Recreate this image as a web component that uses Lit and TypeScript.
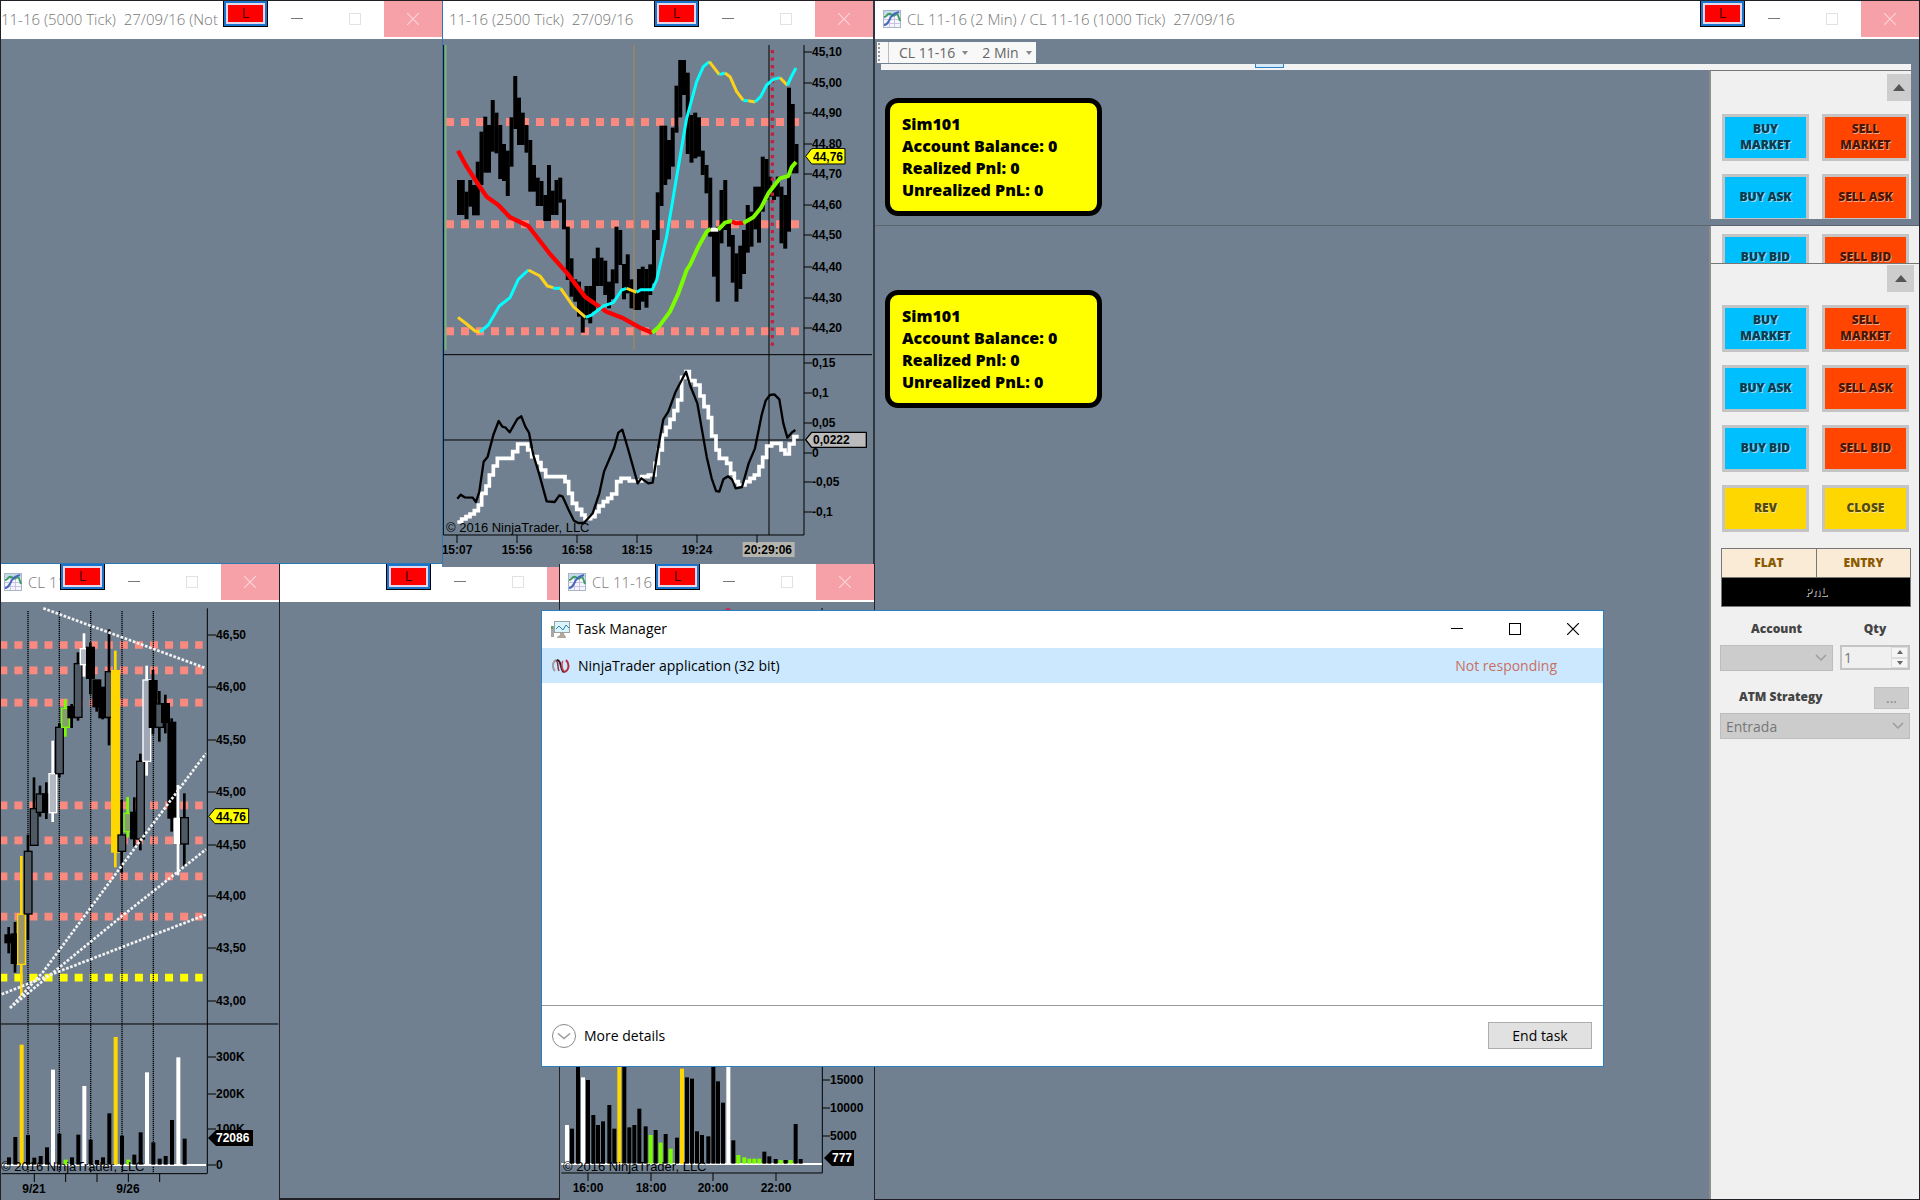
import { LitElement, html, svg, css, nothing } from "lit";
import { customElement } from "lit/decorators.js";

type Pair = [number, number];
/** x, wick top, wick bottom, body top, body bottom, colour, body fill */
type Candle = [number, number, number, number, number, string, string];
type Volume = [number, number, string];

const K = "#000";
const W = "#fff";
const Y = "#ffd700";
const G = "#7cfc00";

/* Chart geometry is kept in thirds of a pixel. */
const PRICE_BARS: Pair[] = [
  [450, 555], [450, 555], [485, 567], [450, 530], [465, 556], [395, 556], [305, 465], [260, 428], [285, 428], [210, 365],
  [248, 370], [285, 447], [342, 453], [362, 498], [262, 410], [138, 297], [203, 345], [248, 345], [285, 368], [330, 485],
  [405, 485], [443, 528], [453, 528], [495, 573], [405, 573], [482, 555], [450, 555], [443, 518], [508, 598], [590, 750],
  [685, 800], [748, 815], [755, 860], [785, 908], [768, 868], [768, 880], [685, 845], [653, 768], [683, 768], [692, 795],
  [755, 835], [718, 808], [590, 760], [600, 705], [702, 808], [673, 790], [748, 835], [785, 840], [717, 840], [710, 815],
  [717, 833], [703, 795], [600, 760], [487, 630], [287, 528], [287, 465], [330, 448], [293, 410], [167, 308], [90, 262],
  [90, 195], [128, 372], [255, 398], [248, 385], [262, 380], [362, 435], [405, 490], [443, 620], [600, 740], [590, 815],
  [480, 640], [450, 600], [570, 650], [615, 758], [670, 815], [647, 777], [600, 732], [525, 668], [545, 650], [470, 598],
  [470, 638], [380, 545], [387, 510], [440, 500], [470, 510], [440, 500], [470, 640], [495, 656], [173, 605], [222, 430],
  [342, 430],
];

const CANDLES: Candle[] = [
  [26, 1101, 1180, 1125, 1148, K, K],
  [45, 1086, 1238, 1122, 1210, K, K],
  [64, 888, 1308, 1063, 1213, Y, "#9a9468"],
  [84, 824, 1140, 874, 1062, K, "#4f5963"],
  [102, 652, 856, 746, 856, K, "#4f5963"],
  [120, 677, 770, 702, 757, K, "#4f5963"],
  [139, 667, 777, 702, 757, K, K],
  [158, 542, 786, 641, 758, W, "#b3b9c2"],
  [178, 490, 652, 502, 641, K, "#4f5963"],
  [196, 418, 530, 445, 502, G, "#83a06d"],
  [215, 432, 504, 440, 473, K, K],
  [234, 277, 482, 311, 472, K, "#4f5963"],
  [252, 220, 350, 266, 314, W, "#b3b9c2"],
  [271, 247, 403, 262, 355, K, K],
  [290, 360, 455, 360, 440, K, K],
  [308, 382, 478, 382, 473, K, K],
  [327, 208, 556, 335, 472, K, "#4f5963"],
  [346, 272, 922, 332, 876, Y, Y],
  [365, 720, 938, 825, 874, K, "#4f5963"],
  [383, 711, 832, 760, 815, G, "#83a06d"],
  [403, 712, 860, 757, 836, K, K],
  [421, 581, 871, 604, 837, K, "#4f5963"],
  [440, 317, 647, 360, 604, W, "#9fa8b4"],
  [459, 330, 523, 362, 502, K, K],
  [478, 393, 545, 432, 502, K, "#4f5963"],
  [496, 404, 520, 431, 487, K, K],
  [515, 475, 815, 487, 774, K, K],
  [534, 675, 946, 775, 850, W, W],
  [553, 700, 917, 773, 852, K, "#4f5963"],
];

const VOLUME_A: Volume[] = [
  [27, 472, K], [46, 411, K], [65, 134, Y], [84, 405, K], [103, 473, K], [122, 468, K], [141, 442, K], [159, 209, W],
  [178, 401, K], [197, 479, G], [216, 472, K], [235, 404, K], [253, 258, W], [272, 419, K], [291, 480, K], [309, 472, K],
  [328, 340, K], [347, 111, Y], [366, 407, K], [385, 479, G], [403, 464, K], [422, 397, K], [441, 217, W], [460, 427, K],
  [479, 476, K], [497, 468, K], [516, 360, K], [535, 172, W], [554, 416, K],
];

const VOLUME_B: Volume[] = [
  [81, 405, W], [96, 416, K], [114, 200, K], [129, 262, W], [144, 270, K], [160, 375, K], [174, 405, K], [189, 394, K],
  [208, 345, K], [223, 416, K], [238, 200, Y], [253, 200, K], [268, 412, K], [283, 405, K], [298, 356, K], [317, 409, K],
  [332, 435, G], [347, 420, K], [362, 458, G], [377, 432, K], [392, 476, G], [411, 443, K], [426, 236, Y], [441, 262, K],
  [456, 266, K], [471, 424, K], [486, 435, K], [505, 439, K], [520, 200, K], [534, 274, K], [549, 338, K], [565, 200, W],
  [580, 451, K], [595, 495, G], [613, 502, G], [628, 506, G], [643, 506, G], [658, 506, G], [673, 485, K], [688, 499, K],
  [707, 507, K], [722, 510, G], [737, 510, K], [752, 510, G], [767, 402, K], [782, 507, K],
];

const line = (points: string, colour: string, width: number) =>
  svg`<polyline points=${points} fill="none" stroke=${colour} stroke-width=${width} stroke-linejoin="round"></polyline>`;

/* Axis scale: a tick at the plot edge followed by its value. */
const scale = (x: number, values: [number, string][]) =>
  values.map(
    ([y, label]) => svg`
      <path d=${`M${x} ${y}h8`} stroke="#000"></path>
      <text class="axis" x=${x + 8} y=${y + 4}>${label}</text>`
  );

const times = (y: number, values: [number, string][]) =>
  values.map(
    ([x, label]) => svg`
      <path d=${`M${x} ${y}v8`} stroke="#000"></path>
      <text class="axis mid" x=${x} y=${y + 19}>${label}</text>`
  );

const chartIcon = html`<svg class="icon" viewBox="0 0 18 18" width="18" height="18" aria-hidden="true">
  <rect x="0" y="0" width="18" height="18" fill="#a9b4c8"></rect>
  <rect x="1" y="1" width="16" height="16" fill="#f4f6fb"></rect>
  <rect x="1" y="1" width="16" height="4" fill="#c3dbe6"></rect>
  <path d="M6.500 5v12M11.500 5v12M1 9.500h16M1 13.500h16" stroke="#c9c3e6"></path>
  <path d="M1 7C4 7 4 3 7 4S9 7 12 5S15 5 17 11" fill="none" stroke="#3f9c62" stroke-width="2"></path>
  <path d="M1 15C5 15 6 10 8 7S12 3 16 2" fill="none" stroke="#4667bd" stroke-width="2"></path>
</svg>`;

const taskIcon = html`<svg class="icon" viewBox="0 0 20 18" width="20" height="18" aria-hidden="true">
  <path d="M1 6h3v11h-3z" fill="#a5a9a6"></path>
  <path d="M1 6h2v3h-2z" fill="#58a55b"></path>
  <rect x="4.500" y="1.500" width="15" height="11" fill="#d9f4fd" stroke="#9a9f9f"></rect>
  <path d="M6 9l3-3 4 4 3-5 3 3" fill="none" stroke="#2f7fb0"></path>
  <path d="M10 13h4v1l2 3v1h-9v-1l3-2z" fill="#b3a999"></path>
</svg>`;

const ninjaIcon = html`<svg class="icon" viewBox="0 0 18 14" width="18" height="14" aria-hidden="true">
  <path d="M3 12C0 9 0 3 4 1" fill="none" stroke="#a39c9f" stroke-width="2"></path>
  <path d="M4 1C7 3 5 8 7 12" fill="none" stroke="#8f2f3b" stroke-width="1.500"></path>
  <path d="M5 1C10 1 8 12 12 13" fill="none" stroke="#33222a" stroke-width="2"></path>
  <path d="M11 2C9 4 10 11 12 12" fill="none" stroke="#d5404c" stroke-width="1.500"></path>
  <path d="M12 13C17 12 18 5 14 1" fill="none" stroke="#b92d3a" stroke-width="2"></path>
</svg>`;

const controls = html`<div class="controls">
  <button aria-label="Minimize">
    <svg viewBox="0 0 12 12" width="12" height="12"><path d="M0 5.5h12" stroke="currentColor"></path></svg>
  </button>
  <button class="max" aria-label="Maximize">
    <svg viewBox="0 0 12 12" width="12" height="12">
      <rect x=".5" y=".5" width="11" height="11" fill="none" stroke="currentColor"></rect>
    </svg>
  </button>
  <button class="close" aria-label="Close">
    <svg viewBox="0 0 12 12" width="12" height="12">
      <path d="M0 0L12 12M12 0L0 12" stroke="currentColor" stroke-width="1.2"></path>
    </svg>
  </button>
</div>`;

const titleBar = (title: string, icon: boolean) => html`<header class="bar">
  ${icon ? chartIcon : nothing}
  <span class="title">${title}</span>
  <span class="badge">L</span>
  ${controls}
</header>`;

const chevron = html`<svg class="chev" viewBox="0 0 12 8" width="12" height="8" aria-hidden="true">
  <path d="M1 1l5 5 5-5" fill="none" stroke="#9c9c9c" stroke-width="1.5"></path>
</svg>`;

@customElement("app-root")
export class AppRoot extends LitElement {
  static styles = css`
    :host {
      display: block;
      font-family: "Open Sans", "Noto Sans", sans-serif;
      font-size: 14px;
      color: #000;
    }
    * { box-sizing: border-box; }
    button, input, select { font: inherit; margin: 0; padding: 0; border: 0; border-radius: 0; }
    svg { display: block; }
    .desktop {
      position: relative;
      height: 100vh;
      min-height: 1200px;
      overflow: hidden;
      background: #202026;
    }
    .win {
      position: absolute;
      display: flex;
      flex-direction: column;
      background: #708090;
      overflow: hidden;
    }
    .w1 { left: 1px; top: 1px; width: 442px; height: 563px; z-index: 3; border: solid #2a79b5; border-width: 0 1px 1px 0; }
    .w2 { left: 442px; top: 1px; width: 431px; height: 566px; z-index: 2; }
    .w3 { left: 873px; top: 1px; right: 1px; bottom: 1px; z-index: 1; border-left: 2px solid #30363e; }
    .w4 { left: 1px; top: 564px; width: 279px; bottom: 0; z-index: 2; border-right: 1px solid #222; }
    .w5 { left: 279px; top: 564px; width: 326px; bottom: 2px; z-index: 1; }
    .w6 { left: 559px; top: 564px; width: 316px; bottom: 0; z-index: 4; border: solid #222; border-width: 0 1px; }
    .bar {
      flex: none;
      display: flex;
      align-items: center;
      height: 38px;
      background: #fff;
      color: #777;
    }
    .bar .icon { flex: none; margin: 0 6px 2px 8px; }
    .w4 .bar .icon { margin-left: 3px; }
    .title { flex: 1; min-width: 0; white-space: pre; font-size: 15px; font-weight: 300; line-height: 36px; align-self: flex-start; }
    .w2 .title { padding-left: 7px; }
    .badge {
      flex: none;
      align-self: flex-start;
      position: relative;
      width: 45px;
      height: 26px;
      border: 1px solid #000;
      border-top: 0;
      background: #f00;
      box-shadow: inset 0 0 0 2px #1874cd, inset 0 0 0 4px #e6d8e8;
      color: #400;
      text-align: center;
      line-height: 24px;
    }
    .controls { flex: none; align-self: flex-start; display: flex; height: 36px; }
    .controls button { width: 58px; display: grid; place-items: center; background: transparent; color: #777; }
    .controls .max { color: #e2e2e2; }
    .controls .close { background: #f6a0a8; color: #fbd5d8; }
    .axis { font: bold 12px "Liberation Sans", sans-serif; }
    .mid { text-anchor: middle; }
    .copy { font: 13px "Liberation Sans", sans-serif; }
    .chart { width: 100%; height: auto; flex: none; }

    .tools { display: flex; padding: 3px 3px 1px 2px; }
    .toolbar { display: flex; align-items: center; height: 21px; background: #f8f8f8; color: #666; }
    .grip { width: 12px; height: 21px; border-right: 1px solid #bbb; background: radial-gradient(#999 1px, transparent 1px) 0 0 / 4px 4px repeat-y; }
    .toolbar button { display: flex; align-items: center; gap: 7px; background: transparent; color: inherit; padding: 0 4px 0 10px; line-height: 21px; }
    .strip { height: 6px; margin: 0 8px 0 6px; background: #f3f3f3; display: flex; }
    .tab { width: 29px; height: 4px; margin-left: 374px; border: 1px solid #2a82c9; border-top: 0; background: #d4e8f6; }
    .row { display: flex; }
    .upper { height: 156px; border-bottom: 1px solid #5b6570; }
    .lower { flex: 1; }
    .pane { flex: 1; padding: 28px 0 0 10px; }
    .lower .pane { padding-top: 64px; }
    .account {
      width: 217px;
      height: 118px;
      padding: 10px 12px;
      border: 5px solid #000;
      border-radius: 13px;
      background: #ff0;
      font: 800 16px/22px "Open Sans", sans-serif;
    }
    .account p { margin: 0; }
    .panel { width: 210px; border-left: 2px solid #8d8d8d; background: #f0f0f0; overflow: hidden; }
    .upper .panel { width: 202px; margin: 0 8px 6px 0; border-top: 1px solid #777; }
    .cut { height: 37px; padding-top: 8px; overflow: hidden; }
    .full { border-top: 1px solid #777; }
    .scroll { display: flex; justify-content: flex-end; padding: 3px 0 13px; }
    .full .scroll { padding: 1px 5px 13px; }
    .scroll button { width: 24px; height: 27px; background: #cdcdcd; display: grid; place-items: center; }
    .full .scroll button { width: 27px; }
    .orders { display: grid; grid-template-columns: 87px 87px; grid-auto-rows: 47px; gap: 13px; padding-left: 11px; }
    .orders button {
      border: 3px solid #c4c4c4;
      font: 800 12px/16px "Open Sans", sans-serif;
      text-align: center;
      padding: 0 8px 1px;
    }
    .buy { background: #00bfff; color: #073d52; text-shadow: 1px 1px #a5d8ea; }
    .sell { background: #ff4500; color: #4d1500; text-shadow: 1px 1px #f0a58c; }
    .flat { background: #ffd700; color: #574a00; text-shadow: 1px 1px #f3e69a; }
    .pos { display: grid; grid-template-columns: 1fr 1fr; width: 190px; margin: 16px 0 0 10px; border: 1px solid #777; font: 800 12px/28px "Open Sans", sans-serif; color: #8b5a00; text-align: center; background: #faebd7; }
    .pos span + span { border-left: 1px solid #777; }
    .pos .pnl { grid-column: 1 / -1; border: 0; border-top: 1px solid #777; background: #000; color: #000; text-shadow: 1px 1px #aaa; }
    .form { display: grid; grid-template-columns: 113px 70px; column-gap: 7px; padding: 12px 0 0 9px; color: #444; }
    .form label { font: 800 12px/20px "Open Sans", sans-serif; text-align: center; margin-bottom: 6px; }
    .pick { display: grid; align-items: center; height: 26px; background: #ccc; border: 1px solid #bdbdbd; }
    .pick select { grid-area: 1 / 1; width: 100%; height: 24px; appearance: none; background: transparent; color: #777; padding-left: 5px; opacity: 1; }
    .chev { grid-area: 1 / 1; justify-self: end; margin-right: 5px; }
    .qty { display: flex; height: 25px; border: 2px solid #c4c4c4; background: #f0f0f0; }
    .qty input { flex: 1; min-width: 0; background: transparent; color: #777; padding-left: 2px; }
    .spin { display: grid; width: 17px; }
    .spin button { display: grid; place-items: center; background: #f5f5f5; border: 1px solid #ddd; }
    .atm { grid-column: 1 / -1; display: flex; justify-content: space-between; align-items: center; margin: 16px 0 4px; width: 189px; }
    .form .atm label { margin: 0 0 2px 19px; }
    .atm button { width: 35px; height: 22px; background: #ccc; border: 1px solid #c0c0c0; color: #888; line-height: 16px; }
    .wide { grid-column: 1 / -1; }

    .tm { left: 541px; top: 610px; width: 1063px; height: 457px; z-index: 5; background: #fff; border: 1px solid #2a7fc4; }
    .tm .bar { color: #000; height: 37px; padding-right: 1px; }
    .tm .title { font-size: 14px; font-weight: 400; }
    .tm .controls button { color: #000; background: transparent; }
    .tasks { width: 100%; border-collapse: collapse; background: #cce8ff; }
    .tasks td { height: 35px; padding: 0; }
    .tasks .state { text-align: right; padding-right: 46px; color: #c8705f; }
    .app { display: flex; align-items: center; }
    .app .icon { margin: 0 8px 0 10px; }
    .foot { margin-top: auto; height: 61px; border-top: 1px solid #999; display: flex; align-items: center; justify-content: space-between; padding: 0 11px 1px 10px; }
    .more { display: flex; align-items: center; gap: 8px; background: transparent; color: #000; }
    .end { width: 104px; height: 27px; background: #e1e1e1; border: 1px solid #adadad; color: #000; }
  `;

  private tickChart() {
    return html`<svg class="chart" viewBox="0 0 431 528" role="img" aria-label="2500 tick chart">
      <g transform="translate(-2 -9) scale(.33333)">
        ${[276, 583, 904].map((y) => svg`<path d=${`M18 ${y}H1077`} stroke="#fa8a80" stroke-width="24" stroke-dasharray="24 21"></path>`)}
        <path d="M17 45V960" stroke="#76b873" stroke-width="5"></path>
        <path d="M10 45V1515M1092 45V1515M10 1515H1092M10 974H1296" stroke="#000" stroke-width="3" fill="none"></path>
        ${PRICE_BARS.map(([t, b], i) => svg`<rect x=${51 + i * 11.25} y=${t} width="12" height=${b - t}></rect>`)}
        <path d="M582 45V960" stroke="#b08a50" stroke-width="3"></path>
        <path d="M987 45V1515M10 1230H1092" stroke="#000" stroke-width="3"></path>
        <path d="M997 60V950" stroke="#c4203c" stroke-width="10" stroke-dasharray="10 12.5"></path>
        ${line("54,362 80,410 118,468 140,500 175,525 210,562 265,588 330,672 380,728 435,800 500,845 550,865 600,893 637,908", "#f00", 13)}
        ${line("637,908 655,892 690,845 715,790 740,720 750,705 775,650 800,605 812,597", "#7cfc00", 12)}
        ${line("812,599 835,599", "#fff", 12)}
        ${line("835,599 855,578 876,573", "#7cfc00", 12)}
        ${line("876,575 888,580 910,579", "#f00", 12)}
        ${line("910,579 940,562 962,535 985,490 1020,445 1045,438 1055,412 1068,396", "#7cfc00", 12)}
        ${line("54,862 80,882 105,903 120,906", "#ffd21a", 9)}
        ${line("120,906 145,885 178,828 210,803 235,748 265,720", "#0ff", 9)}
        ${line("265,720 300,738 322,768 340,773", "#ffd21a", 9)}
        ${line("340,775 362,775", "#0ff", 9)}
        ${line("362,775 400,830 437,862", "#ffd21a", 9)}
        ${line("437,862 455,855 490,828 520,818 545,780 560,775", "#0ff", 9)}
        ${line("560,775 590,787", "#ffd21a", 9)}
        ${line("590,787 602,779 637,779 650,750 680,620 710,440 740,265 770,155 790,110 808,95", "#0ff", 9)}
        ${line("808,95 838,134", "#ffd21a", 9)}
        ${line("838,134 855,129", "#0ff", 9)}
        ${line("855,129 870,140 890,185 910,211", "#ffd21a", 9)}
        ${line("910,212 925,212", "#0ff", 9)}
        ${line("925,212 945,216", "#ffd21a", 9)}
        ${line("945,216 962,200 980,165 1000,148 1020,143", "#0ff", 9)}
        ${line("1020,143 1042,166", "#ffd21a", 9)}
        ${line("1042,166 1055,138 1068,114", "#0ff", 9)}
        <g transform="translate(0 930)">
          <path
            d="M52 546H65V537H78V530H90V522H103V512H115V495H125V460H138V438H148V405H160V378H172V355H218V335H233V312H263V330H275V350H292V368H303V390H317V410H375V425H386V460H397V490H410V508H425V525H435V536H452V530H465V515H477V498H490V485H503V475H515V462H530V425H543V415H568V423H605V410H625V405H645V370H655V330H667V285H678V262H690V238H702V212H713V180H725V112H738V95H748V122H765V135H780V168H792V200H805V233H815V288H828V330H838V355H860V370H872V400H883V425H895V435H915V425H930V415H943V405H957V380H968V352H980V318H995V310H1023V330H1035V342H1048V312H1062V290H1076"
            fill="none" stroke="#fff" stroke-width="11"></path>
          ${line("52,476 62,464 74,472 98,473 108,486 118,455 131,365 143,350 160,285 176,243 187,260 197,263 209,277 232,237 244,229 256,260 267,278 280,345 297,400 320,484 344,486 358,466 368,470 385,508 402,542 415,549 432,549 458,520 478,460 492,395 522,325 535,278 547,269 565,330 593,430 604,415 625,430 638,428 655,320 670,238 685,215 707,155 738,95 750,135 772,190 800,350 815,415 828,453 838,455 850,418 864,409 876,418 887,445 906,441 926,370 945,325 965,225 977,182 990,165 1003,163 1018,178 1030,250 1042,293 1055,278 1066,270", "#000", 7)}
        </g>
        <path d="M1097 379L1115 356H1215V402H1115Z" fill="#ff0" stroke="#000" stroke-width="3"></path>
        <path d="M1097 1229L1115 1207H1279V1252H1115Z" fill="#bbb" stroke="#000" stroke-width="4"></path>
        <rect x="908" y="1536" width="156" height="45" fill="#b5b5b0"></rect>
      </g>
      ${scale(362, [[13, "45,10"], [44, "45,00"], [74, "44,90"], [105, "44,80"], [135, "44,70"], [166, "44,60"], [196, "44,50"], [228, "44,40"], [259, "44,30"], [289, "44,20"]])}
      ${scale(362, [[324, "0,15"], [354, "0,1"], [384, "0,05"], [414, "0"], [443, "-0,05"], [473, "-0,1"]])}
      <path d="M371 110h31v14h-31z" fill="#ff0"></path>
      <text class="axis" x="371" y="122">44,76</text>
      <text class="axis" x="371" y="405">0,0222</text>
      ${times(496, [[15, "15:07"], [75, "15:56"], [135, "16:58"], [195, "18:15"], [255, "19:24"]])}
      <path d="M315 496v8" stroke="#000"></path>
      <text class="axis mid" x="326" y="515">20:29:06</text>
      <text class="copy" x="4" y="493">© 2016 NinjaTrader, LLC</text>
    </svg>`;
  }

  private dailyChart() {
    return html`<svg class="chart" viewBox="0 0 278 598" role="img" aria-label="Daily chart">
      <g transform="translate(-1 -42) scale(.33333)">
        ${[255, 331, 428, 736, 841, 949, 1070].map((y) => svg`<path d=${`M-2 ${y}H608`} stroke="#fa8a80" stroke-width="23" stroke-dasharray="24 21.2"></path>`)}
        <path d="M-2 1253H608" stroke="#ff0" stroke-width="23" stroke-dasharray="24 21.2"></path>
        ${[84, 178, 272, 366, 460].map((x) => svg`<path d=${`M${x} 153V1840`} stroke="#000" stroke-width="4" stroke-dasharray="4 2"></path>`)}
        ${CANDLES.map(
          ([x, t, b, bt, bb, c, f]) => svg`
            <path d=${`M${x} ${t}V${b}`} stroke=${c} stroke-width="8"></path>
            <rect x=${x - 11} y=${bt} width="23" height=${bb - bt} fill=${f} stroke=${c} stroke-width="4"></rect>`
        )}
        <path
          d="M130 145L618 325M30 1344L130 1235L415 850L618 580M30 1344L150 1245L370 1065L618 868M5 1303L150 1245L618 1064"
          fill="none" stroke="#f4f4f4" stroke-width="8" stroke-dasharray="8 5"></path>
        <path d="M622 145V1840M5 1841H622M0 1392H835" stroke="#000" stroke-width="3"></path>
        <path d="M5 1815H618" stroke="#fff" stroke-width="6"></path>
        ${VOLUME_A.map(([x, t, c]) => svg`<rect x=${x - 6} y=${t + 1320} width="12" height=${494 - t} fill=${c}></rect>`)}
        ${[103, 197, 291, 385, 479].map((x) => svg`<path d=${`M${x} 1841v25`} stroke="#000" stroke-width="3"></path>`)}
        <path d="M626 769L645 746H746V791H645Z" fill="#ff0" stroke="#000" stroke-width="3"></path>
      </g>
      ${scale(207, [[33, "46,50"], [85, "46,00"], [138, "45,50"], [190, "45,00"], [243, "44,50"], [294, "44,00"], [346, "43,50"], [399, "43,00"], [455, "300K"], [492, "200K"], [527, "100K"], [563, "0"]])}
      <path d="M207 536L215 528H252V544H215Z"></path>
      <text class="axis" x="215" y="219">44,76</text>
      <text class="axis" x="215" y="540" fill="#fff">72086</text>
      <text class="axis mid" x="33" y="591">9/21</text>
      <text class="axis mid" x="127" y="591">9/26</text>
      <text class="copy" x="0" y="569">© 2016 NinjaTrader, LLC</text>
    </svg>`;
  }

  private volumeChart() {
    return html`<svg class="chart" viewBox="0 0 314 598" role="img" aria-label="Volume chart">
      <circle cx="168" cy="9" r="3" fill="#c03050"></circle>
      <path d="M262 6v4" stroke="#000"></path>
      <g transform="translate(-20 388) scale(.33333)">
        <path d="M64 522H846" stroke="#fff" stroke-width="6"></path>
        ${VOLUME_B.map(([x, t, c]) => svg`<rect x=${x - 6} y=${t} width="12" height=${521 - t} fill=${c}></rect>`)}
        <path d="M847 230V549M64 549H847" stroke="#000" stroke-width="3"></path>
      </g>
      ${times(571, [[28, "16:00"], [91, "18:00"], [153, "20:00"], [216, "22:00"]])}
      ${scale(262, [[478, "15000"], [506, "10000"], [534, "5000"]])}
      <path d="M264 556L272 548H294V564H272Z"></path>
      <text class="axis" x="272" y="560" fill="#fff">777</text>
      <text class="copy" x="3" y="569">© 2016 NinjaTrader, LLC</text>
    </svg>`;
  }

  private account() {
    return html`<section class="account">
      <p>Sim101</p>
      <p>Account Balance: 0</p>
      <p>Realized Pnl: 0</p>
      <p>Unrealized PnL: 0</p>
    </section>`;
  }

  private orders(labels: string[]) {
    return html`<div class="orders">
      ${labels.map((l) => {
        const kind = l.startsWith("BUY") ? "buy" : l.startsWith("SELL") ? "sell" : "flat";
        return html`<button class=${kind}>${l}</button>`;
      })}
    </div>`;
  }

  private scrollUp() {
    return html`<div class="scroll">
      <button aria-label="Scroll up">
        <svg viewBox="0 0 12 7" width="12" height="7"><path d="M0 7L6 0L12 7z" fill="#555"></path></svg>
      </button>
    </div>`;
  }

  private tradeWindow() {
    const caret = html`<svg viewBox="0 0 6 4" width="6" height="4"><path d="M0 0h6L3 4z" fill="#888"></path></svg>`;
    return html`<section class="win w3">
      ${titleBar("CL 11-16 (2 Min) / CL 11-16 (1000 Tick)  27/09/16", true)}
      <div class="tools">
        <div class="toolbar">
          <span class="grip"></span>
          <button>CL 11-16 ${caret}</button>
          <button>2 Min ${caret}</button>
        </div>
      </div>
      <div class="strip"><span class="tab"></span></div>
      <div class="row upper">
        <div class="pane">${this.account()}</div>
        <div class="panel">
          ${this.scrollUp()} ${this.orders(["BUY MARKET", "SELL MARKET", "BUY ASK", "SELL ASK"])}
        </div>
      </div>
      <div class="row lower">
        <div class="pane">${this.account()}</div>
        <div class="panel">
          <div class="cut">${this.orders(["BUY BID", "SELL BID"])}</div>
          <div class="full">
            ${this.scrollUp()}
            ${this.orders(["BUY MARKET", "SELL MARKET", "BUY ASK", "SELL ASK", "BUY BID", "SELL BID", "REV", "CLOSE"])}
            <div class="pos"><span>FLAT</span><span>ENTRY</span><span class="pnl">PnL</span></div>
            <form class="form">
              <label for="acc">Account</label>
              <label for="qty">Qty</label>
              <div class="pick"><select id="acc" disabled><option></option></select>${chevron}</div>
              <div class="qty">
                <input id="qty" type="text" inputmode="numeric" value="1" />
                <div class="spin">
                  <button type="button" aria-label="Increase">
                    <svg viewBox="0 0 6 4" width="6" height="4"><path d="M0 4L3 0L6 4z" fill="#666"></path></svg>
                  </button>
                  <button type="button" aria-label="Decrease">
                    <svg viewBox="0 0 6 4" width="6" height="4"><path d="M0 0h6L3 4z" fill="#666"></path></svg>
                  </button>
                </div>
              </div>
              <div class="atm"><label for="atm">ATM Strategy</label><button type="button">...</button></div>
              <div class="pick wide"><select id="atm" disabled><option>Entrada</option></select>${chevron}</div>
            </form>
          </div>
        </div>
      </div>
    </section>`;
  }

  private taskManager() {
    return html`<section class="win tm">
      <header class="bar">${taskIcon}<span class="title">Task Manager</span>${controls}</header>
      <table class="tasks">
        <tr>
          <td><div class="app">${ninjaIcon}NinjaTrader application (32 bit)</div></td>
          <td class="state">Not responding</td>
        </tr>
      </table>
      <footer class="foot">
        <button class="more">
          <svg viewBox="0 0 24 24" width="24" height="24" aria-hidden="true">
            <circle cx="12" cy="12" r="11.5" fill="none" stroke="#888"></circle>
            <path d="M6 9.500l6 5 6-5" fill="none" stroke="#999" stroke-width="1.500"></path>
          </svg>
          More details
        </button>
        <button class="end">End task</button>
      </footer>
    </section>`;
  }

  render() {
    return html`<main class="desktop">
      <section class="win w1">${titleBar("11-16 (5000 Tick)  27/09/16 (Not R", false)}</section>
      <section class="win w2">${titleBar("11-16 (2500 Tick)  27/09/16", false)} ${this.tickChart()}</section>
      ${this.tradeWindow()}
      <section class="win w4">${titleBar("CL 11", true)} ${this.dailyChart()}</section>
      <section class="win w5">${titleBar("", false)}</section>
      <section class="win w6">${titleBar("CL 11-16", true)} ${this.volumeChart()}</section>
      ${this.taskManager()}
    </main>`;
  }
}
